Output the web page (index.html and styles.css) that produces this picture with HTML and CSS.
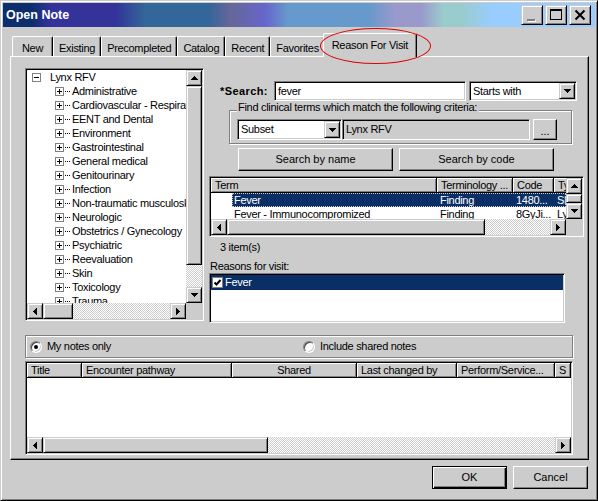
FILE: index.html
```html
<!DOCTYPE html>
<html lang="en">
<head>
  <meta charset="UTF-8">
  <title>Open Note</title>
  <link rel="stylesheet" href="styles.css">
</head>
<body>
  <!-- shared glyphs -->
  <svg class="defs" width="0" height="0">
    <symbol id="up" viewBox="0 0 7 4"><path d="M3 0h1v1h1v1h1v1h1v1h-7v-1h1v-1h1v-1h1z"/></symbol>
    <symbol id="dn" viewBox="0 0 7 4"><path d="M0 0h7v1h-1v1h-1v1h-1v1h-1v-1h-1v-1h-1v-1h-1z"/></symbol>
    <symbol id="lt" viewBox="0 0 4 7"><path d="M3 0h1v7h-1v-1h-1v-1h-1v-1h-1v-1h1v-1h1v-1h1z"/></symbol>
    <symbol id="rt" viewBox="0 0 4 7"><path d="M0 0h1v1h1v1h1v1h1v1h-1v1h-1v1h-1v1h-1z"/></symbol>
    <symbol id="plus" viewBox="0 0 9 9"><path d="M0 0h9v9H0z" fill="#808080"/><path d="M1 1h7v7H1z" fill="#fff"/><path d="M2 4h5v1H2zM4 2h1v5H4z" fill="#000"/></symbol>
    <symbol id="minus" viewBox="0 0 9 9"><path d="M0 0h9v9H0z" fill="#808080"/><path d="M1 1h7v7H1z" fill="#fff"/><path d="M2 4h5v1H2z" fill="#000"/></symbol>
  </svg>

  <div class="window">

    <!-- Title bar -->
    <div class="titlebar">
      <span class="caption">Open Note</span>
      <div class="caption-btns">
        <span class="cap-btn"><svg width="20" height="18"><path d="M6 14h8v2H6z" fill="#fff"/><path d="M5 13h8v2H5z" fill="#808080"/></svg></span>
        <span class="cap-btn"><svg width="20" height="18"><path d="M4 3h12v11H4zM5 5h10v8H5z" fill-rule="evenodd"/></svg></span>
        <span class="cap-btn"><svg width="20" height="18"><path d="M5.5 4.5l9 9M14.5 4.5l-9 9" stroke="#000" stroke-width="2"/></svg></span>
      </div>
    </div>

    <!-- Tabs -->
    <div class="tabs">
      <span class="tab">New</span>
      <span class="tab">Existing</span>
      <span class="tab">Precompleted</span>
      <span class="tab">Catalog</span>
      <span class="tab">Recent</span>
      <span class="tab">Favorites</span>
      <span class="tab selected">Reason For Visit</span>
    </div>
    <span class="mark"></span>

    <div class="page">
      <div class="top">

        <!-- Tree -->
        <div class="tree sunken">
          <ul class="tree-items">
            <li class="root"><svg class="box"><use href="#minus"/></svg><span>Lynx RFV</span></li>
            <li><svg class="box"><use href="#plus"/></svg><i class="dots"></i><span>Administrative</span></li>
            <li><svg class="box"><use href="#plus"/></svg><i class="dots"></i><span>Cardiovascular - Respiratory</span></li>
            <li><svg class="box"><use href="#plus"/></svg><i class="dots"></i><span>EENT and Dental</span></li>
            <li><svg class="box"><use href="#plus"/></svg><i class="dots"></i><span>Environment</span></li>
            <li><svg class="box"><use href="#plus"/></svg><i class="dots"></i><span>Gastrointestinal</span></li>
            <li><svg class="box"><use href="#plus"/></svg><i class="dots"></i><span>General medical</span></li>
            <li><svg class="box"><use href="#plus"/></svg><i class="dots"></i><span>Genitourinary</span></li>
            <li><svg class="box"><use href="#plus"/></svg><i class="dots"></i><span>Infection</span></li>
            <li><svg class="box"><use href="#plus"/></svg><i class="dots"></i><span>Non-traumatic musculoskeletal</span></li>
            <li><svg class="box"><use href="#plus"/></svg><i class="dots"></i><span>Neurologic</span></li>
            <li><svg class="box"><use href="#plus"/></svg><i class="dots"></i><span>Obstetrics / Gynecology</span></li>
            <li><svg class="box"><use href="#plus"/></svg><i class="dots"></i><span>Psychiatric</span></li>
            <li><svg class="box"><use href="#plus"/></svg><i class="dots"></i><span>Reevaluation</span></li>
            <li><svg class="box"><use href="#plus"/></svg><i class="dots"></i><span>Skin</span></li>
            <li><svg class="box"><use href="#plus"/></svg><i class="dots"></i><span>Toxicology</span></li>
            <li><svg class="box"><use href="#plus"/></svg><i class="dots"></i><span>Trauma</span></li>
          </ul>
          <div class="vscroll">
            <span class="sb-btn"><svg class="av"><use href="#up"/></svg></span>
            <span class="thumb tree-vthumb"></span>
            <span class="track"></span>
            <span class="sb-btn"><svg class="av"><use href="#dn"/></svg></span>
          </div>
          <div class="hscroll">
            <span class="sb-btn"><svg class="ah"><use href="#lt"/></svg></span>
            <span class="thumb tree-hthumb"></span>
            <span class="track"></span>
            <span class="sb-btn"><svg class="ah"><use href="#rt"/></svg></span>
          </div>
          <span class="corner"></span>
        </div>

        <!-- Search panel -->
        <div class="search-panel">
          <div class="search-row">
            <label class="search-label">*Search:</label>
            <div class="field search-field">fever</div>
            <div class="field combo starts">
              <span class="combo-text">Starts with</span>
              <span class="sb-btn drop"><svg class="av"><use href="#dn"/></svg></span>
            </div>
          </div>

          <fieldset class="criteria">
            <legend>Find clinical terms which match the following criteria:</legend>
            <div class="crit-row">
              <div class="field combo subset">
                <span class="combo-text">Subset</span>
                <span class="sb-btn drop"><svg class="av"><use href="#dn"/></svg></span>
              </div>
              <div class="field readonly">Lynx RFV</div>
              <button class="btn more">...</button>
            </div>
          </fieldset>

          <div class="search-btns">
            <button class="btn wide">Search by name</button>
            <button class="btn wide">Search by code</button>
          </div>

          <div class="results sunken">
            <div class="lv">
              <div class="lv-head results-head">
                <span class="hd">Term</span>
                <span class="hd">Terminology ...</span>
                <span class="hd">Code</span>
                <span class="hd">Type</span>
              </div>
              <div class="lv-row selected">
                <span>Fever</span><span>Finding</span><span>1480...</span><span>SNOMED</span>
              </div>
              <div class="lv-row">
                <span>Fever - Immunocompromized</span><span>Finding</span><span>8GyJi...</span><span>Lynx</span>
              </div>
            </div>
            <div class="vscroll">
              <span class="sb-btn"><svg class="av"><use href="#up"/></svg></span>
              <span class="thumb res-vthumb"></span>
              <span class="sb-btn"><svg class="av"><use href="#dn"/></svg></span>
            </div>
            <div class="hscroll">
              <span class="sb-btn"><svg class="ah"><use href="#lt"/></svg></span>
              <span class="thumb res-hthumb"></span>
              <span class="track"></span>
              <span class="sb-btn"><svg class="ah"><use href="#rt"/></svg></span>
            </div>
            <span class="corner"></span>
          </div>

          <div class="count">3 item(s)</div>
          <div class="reasons-label">Reasons for visit:</div>
          <div class="reasons sunken">
            <div class="reason selected">
              <svg class="check" width="11" height="11"><path d="M0 0h11v11H0z" fill="#808080"/><path d="M1 1h9v9H1z" fill="#fff"/><path d="M2.5 5.5l2 2 4-4.5" fill="none" stroke="#000" stroke-width="2"/></svg>
              <span>Fever</span>
            </div>
          </div>
        </div>
      </div>

      <!-- Note filter -->
      <div class="radio-group">
        <label class="opt"><span class="radio on"></span>My notes only</label>
        <label class="opt"><span class="radio"></span>Include shared notes</label>
      </div>

      <div class="notes sunken">
        <div class="lv-head notes-head">
          <span class="hd">Title</span>
          <span class="hd">Encounter pathway</span>
          <span class="hd center">Shared</span>
          <span class="hd">Last changed by</span>
          <span class="hd">Perform/Service...</span>
          <span class="hd">S</span>
        </div>
        <div class="notes-body"></div>
        <div class="hscroll">
          <span class="sb-btn"><svg class="ah"><use href="#lt"/></svg></span>
          <span class="thumb notes-hthumb"></span>
          <span class="track"></span>
          <span class="sb-btn"><svg class="ah"><use href="#rt"/></svg></span>
        </div>
      </div>
    </div>

    <div class="footer">
      <button class="btn default">OK</button>
      <button class="btn">Cancel</button>
    </div>
  </div>
</body>
</html>
```

FILE: styles.css
```css
/* — Base — */
* { box-sizing: border-box; margin: 0; padding: 0; }
body {
  background: #ccc;
  color: #000;
  font: 11px/13px "Liberation Sans", Arial, sans-serif;
  letter-spacing: -0.3px;
}
.defs { position: absolute; width: 0; height: 0; }
ul { list-style: none; }

/* — 3D edges — */
.raised, .sb-btn, .thumb, .cap-btn {
  background: #ccc;
  border: 1px solid; border-color: #ccc #000 #000 #ccc;
  box-shadow: inset 1px 1px #fff, inset -1px -1px #808080;
}
.sunken {
  border: 1px solid; border-color: #808080 #fff #fff #808080;
  padding: 1px;
  box-shadow: inset 1px 1px #000, inset -1px -1px #ccc;
}

/* — Window — */
.window {
  position: relative;
  width: 598px; height: 501px;
  background: #ccc;
  border: 1px solid; border-color: #ccc #000 #000 #ccc;
  box-shadow: inset 1px 1px #fff, inset -1px -1px #808080;
  padding: 2px;
}
.titlebar {
  height: 24px;
  display: flex; justify-content: space-between; align-items: center;
  padding: 0 4px 0 3px;
  color: #fff;
  background: linear-gradient(90deg,
    #0c2e6c 0, #0c2e6c 28px, #333399 48px, #333399 112px,
    #336699 142px, #336699 205px, #666699 228px, #6666cc 262px,
    #6699cc 285px, #6699cc 365px, #9999cc 392px, #9999cc 418px,
    #99cccc 440px, #99cccc 458px, #99ccff 490px, #99ccff 100%);
}
.caption { font: bold 12.5px/16px "Liberation Sans", Arial, sans-serif; letter-spacing: 0; }
.caption-btns { display: flex; gap: 2px; }
.cap-btn {
  width: 22px; height: 20px;
  display: flex; align-items: center; justify-content: center;
}
.cap-btn svg { display: block; }

/* — Tabs — */
.tabs {
  display: flex; align-items: flex-end;
  height: 23px;
  margin: 6px 0 0 9px;
}
.tab {
  height: 20px; min-width: 41px;
  padding: 5px 5px 0;
  text-align: center; white-space: nowrap;
  border-top: 1px solid #fff; border-left: 1px solid #fff; border-right: 1px solid #000;
  border-radius: 2px 2px 0 0;
  box-shadow: inset -1px 0 #808080;
}
.tab.selected {
  position: relative; z-index: 1;
  width: 94px; height: 24px;
  margin: 0 -2px -1px;
  padding: 5px 0 0;
  background: #ccc;
}
.mark {
  position: absolute; z-index: 2;
  left: 319px; top: 27px;
  width: 111px; height: 36px;
  border: 1px solid #e00000;
  border-radius: 50%;
}

/* — Tab page — */
.page {
  position: relative;
  margin: 0 6px 0 7px;
  border: 1px solid; border-color: #fff #000 #000 #fff;
  box-shadow: inset -1px -1px #808080;
  padding: 11px 2px 4px 14px;
}
.top { display: flex; align-items: flex-start; }

/* — Scrollbars — */
.vscroll { display: flex; flex-direction: column; }
.hscroll { display: flex; }
.sb-btn {
  flex: none;
  width: 16px; height: 16px;
  display: flex; align-items: center; justify-content: center;
}
.av { width: 7px; height: 4px; display: block; }
.ah { width: 4px; height: 7px; display: block; }
.thumb { flex: none; }
.track {
  flex: 1;
  background: repeating-conic-gradient(#fff 0 25%, #ccc 0 50%) 0 0 / 2px 2px;
}
.corner { background: #ccc; }

/* — Tree — */
.tree {
  width: 179px; height: 253px;
  display: grid;
  grid-template-columns: minmax(0, 1fr) 16px;
  grid-template-rows: minmax(0, 1fr) 16px;
  background: #fff;
}
.tree-items { overflow: hidden; }
.tree-items li {
  display: flex; align-items: center;
  height: 14px; line-height: 14px;
  padding-left: 28px;
  white-space: nowrap;
}
.tree-items li.root { padding-left: 5px; }
.tree-items li.root span { margin-left: 9px; }
.box { width: 9px; height: 9px; flex: none; }
.dots {
  flex: none;
  width: 5px; height: 1px;
  margin: 0 2px 0 1px;
  border-top: 1px dotted #000;
}
.tree-vthumb { height: 179px; }
.tree-hthumb { width: 30px; }

/* — Search panel — */
.search-panel { margin-left: 5px; width: 375px; }
.search-row {
  display: flex; align-items: center;
  height: 20px; margin-top: 13px;
}
.search-label {
  width: 65px; padding-left: 11px;
  font-weight: bold; letter-spacing: 0.4px;
}
.field {
  height: 20px;
  background: #fff;
  border: 1px solid; border-color: #808080 #fff #fff #808080;
  box-shadow: inset 1px 1px #000, inset -1px -1px #ccc;
  padding: 1px 1px 1px 3px;
  line-height: 16px;
  white-space: nowrap;
}
.search-field { width: 192px; }
.combo { display: flex; }
.combo-text { flex: 1; }
.combo .drop { height: 100%; }
.starts { width: 108px; margin-left: 3px; }

.criteria {
  min-width: 0;
  width: 343px;
  margin-left: 20px;
  border: 1px solid #808080;
  box-shadow: inset 1px 1px #fff, 1px 1px #fff;
  padding: 0 6px 3px 7px;
}
.criteria legend {
  padding: 0 2px 6px 1px;
  line-height: 12px;
  background: #ccc;
}
.crit-row { display: flex; height: 21px; }
.crit-row .field { height: 21px; line-height: 17px; }
.subset { width: 105px; }
.readonly { width: 188px; background: #ccc; }

.btn {
  font: inherit; color: #000;
  background: #ccc;
  border: 1px solid; border-color: #fff #000 #000 #fff;
  box-shadow: inset -1px -1px #808080;
  height: 23px;
}
.btn.default {
  border-color: #000;
  box-shadow: inset 1px 1px #fff, inset -1px -1px #000, inset -2px -2px #808080;
}
.more { width: 24px; height: 21px; margin-left: 3px; line-height: 19px; padding-top: 2px; }
.search-btns {
  display: flex; gap: 6px;
  margin-top: 4px; padding-left: 29px;
}
.wide { width: 155px; }

/* — List views — */
.results {
  width: 375px; height: 61px;
  margin-top: 5px;
  display: grid;
  grid-template-columns: minmax(0, 1fr) 16px;
  grid-template-rows: minmax(0, 1fr) 16px;
  background: #fff;
}
.lv { overflow: hidden; }
.lv-head { display: grid; height: 15px; }
.hd {
  background: #ccc;
  border-right: 1px solid #000; border-bottom: 1px solid #000;
  box-shadow: inset 1px 1px #fff, inset -1px -1px #808080;
  padding-left: 4px;
  line-height: 14px;
  white-space: nowrap; overflow: hidden;
}
.hd.center { text-align: center; padding-left: 0; }
.results-head { grid-template-columns: 226px 76px 41px 60px; }
.lv-row {
  display: grid;
  grid-template-columns: 205px 76px 41px 60px;
  height: 14px; line-height: 14px;
  margin-left: 21px;
}
.lv-row span { padding-left: 2px; white-space: nowrap; overflow: hidden; }
.lv-row span + span { padding-left: 3px; }
.lv-row.selected {
  background: #0a2f66; color: #fff;
  outline: 1px dotted #ccc; outline-offset: -1px;
}
.res-vthumb { height: 9px; }
.res-hthumb { width: 258px; }

.count { margin-top: 3px; padding-left: 11px; line-height: 14px; }
.reasons-label { margin-top: 6px; padding-left: 1px; }
.reasons { width: 356px; height: 50px; background: #fff; }
.reason {
  display: flex; align-items: center; gap: 2px;
  height: 15px; line-height: 15px;
  padding-left: 1px;
}
.reason.selected { background: #0a2f66; color: #fff; }
.check { flex: none; display: block; }

/* — Bottom — */
.radio-group {
  display: grid; grid-template-columns: 273px 1fr; align-items: center;
  width: 548px; height: 23px;
  margin-top: 12px;
  border: 1px solid #808080;
  box-shadow: inset 1px 1px #fff, 1px 1px #fff;
}
.opt { display: flex; align-items: center; gap: 5px; padding-left: 4px; }
.radio {
  position: relative;
  width: 12px; height: 12px;
  border-radius: 50%;
  background: #fff;
  border: 1px solid; border-color: #808080 #fff #fff #808080;
  box-shadow: inset 1px 1px #404040, inset -1px -1px #ccc;
}
.radio.on::after {
  content: "";
  position: absolute; left: 3px; top: 3px;
  width: 4px; height: 4px;
  border-radius: 50%;
  background: #000;
}
.notes {
  width: 548px; height: 94px;
  margin-top: 3px;
  display: grid;
  grid-template-rows: 15px minmax(0, 1fr) 16px;
  background: #fff;
}
.notes-head { grid-template-columns: 55px 150px 125px 100px 98px 1fr; }
.notes-hthumb { width: 225px; }

.footer {
  display: flex; justify-content: flex-end; gap: 6px;
  margin-top: 6px; padding-right: 7px;
}
.footer .btn { width: 75px; }
```
